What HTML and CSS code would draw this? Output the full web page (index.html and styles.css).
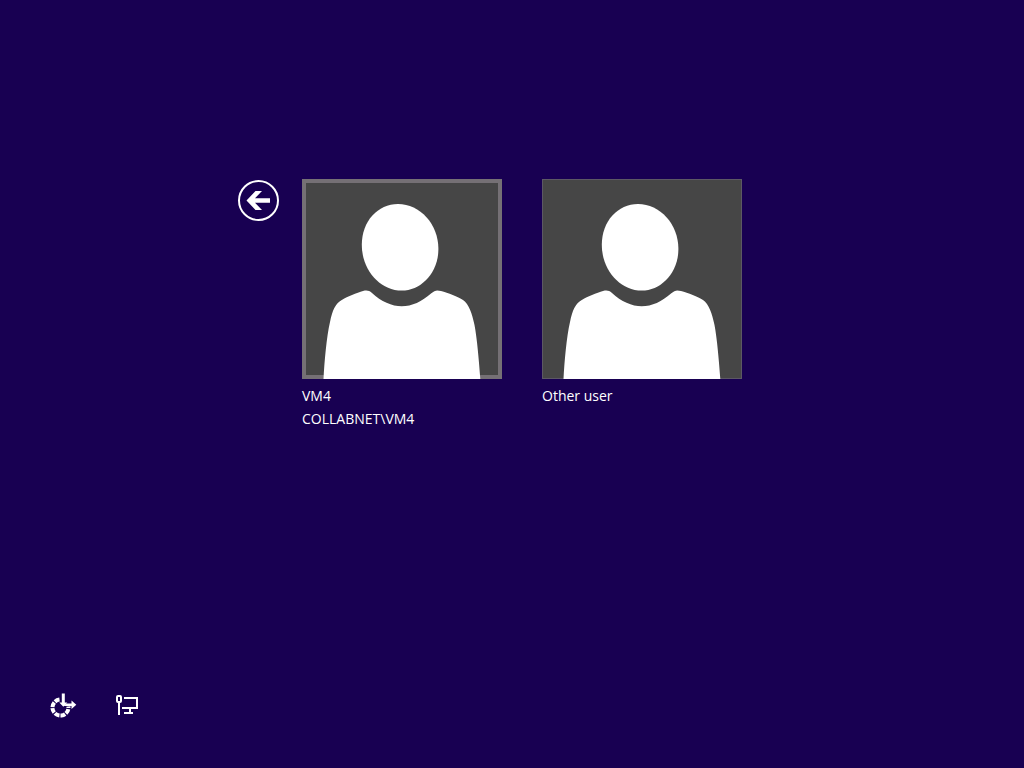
FILE: index.html
```html
<!DOCTYPE html>
<html lang="en">

<head>
    <meta charset="UTF-8">
    <meta name="viewport" content="width=device-width, initial-scale=1.0">
    <title>Sign in</title>
    <link rel="stylesheet" href="styles.css">
</head>

<body>
    <main class="sign-in">
        <button class="back" type="button" aria-label="Back">
            <svg viewBox="0 0 42 42" aria-hidden="true">
                <circle cx="20.5" cy="21.5" r="19.5" />
                <path d="M8.500 21.500L17.500 12H24L17 19.300H32V23.700H17L24 31H17.500Z" />
            </svg>
        </button>
        <div class="users">
            <button class="user selected" type="button">
                <svg class="avatar" viewBox="0 0 200 200" aria-hidden="true">
                    <rect class="frame" width="200" height="200" />
                    <rect class="backdrop" x="4" y="4" width="192" height="192" />
                    <path class="person" d="M96 25C118 25 136.4 45 136.4 70C136.4 94 119 111.6 99.7 111.6C78 111.6 59.8 91 59.8 66C59.8 42 76 25 96 25Z" />
                    <path class="person" d="M21.5 200C22.5 182 24.500 158 28 143C30.500 131 33 125.500 39 121.500C45 117.500 55 114 61 112C65 111 67 111.500 70 114C79 122.500 90 127.300 99.700 127.300C110 127.300 120 122.500 129 114.500C133 111 135 111 139 112C146 114 156 117.500 161 121C167 125.500 170 134 172.500 146C175 159 177 182 178.300 200Z" />
                </svg>
                <span class="name">VM4</span>
                <span class="name">COLLABNET\VM4</span>
            </button>
            <button class="user" type="button">
                <svg class="avatar" viewBox="0 0 200 200" aria-hidden="true">
                    <rect class="frame" width="200" height="200" />
                    <rect class="backdrop" x="1" y="1" width="198" height="198" />
                    <path class="person" d="M96 25C118 25 136.4 45 136.4 70C136.4 94 119 111.6 99.7 111.6C78 111.6 59.8 91 59.8 66C59.8 42 76 25 96 25Z" />
                    <path class="person" d="M21.5 200C22.5 182 24.500 158 28 143C30.500 131 33 125.500 39 121.500C45 117.500 55 114 61 112C65 111 67 111.500 70 114C79 122.500 90 127.300 99.700 127.300C110 127.300 120 122.500 129 114.500C133 111 135 111 139 112C146 114 156 117.500 161 121C167 125.500 170 134 172.500 146C175 159 177 182 178.300 200Z" />
                </svg>
                <span class="name">Other user</span>
            </button>
        </div>
    </main>

    <footer class="tools">
        <button class="tool" type="button" aria-label="Ease of access">
            <svg viewBox="0 0 28 28" aria-hidden="true">
                <path class="ring" d="M9.500 7.600A8 8 0 1 0 18.400 14.600" />
                <path class="solid" d="M11.800 1.500H14.800V10.500H17.300L13.300 14.800L9.300 10.500H11.800Z" />
                <path class="solid" d="M16 11.500H21.500V8.500L26.300 12.800L21.500 17V14H13.500Z" />
            </svg>
        </button>
        <button class="tool" type="button" aria-label="Network">
            <svg viewBox="0 0 28 28" aria-hidden="true">
                <rect class="line" x="1" y="4" width="4" height="6" rx="1" />
                <path class="line" d="M3 10V23M8 6H21V16H6M14 16V21M8 21H17" />
            </svg>
        </button>
    </footer>
</body>

</html>
```

FILE: styles.css
```css
* {
    box-sizing: border-box;
}

body {
    margin: 0;
    min-height: 100vh;
    display: flex;
    flex-direction: column;
    justify-content: space-between;
    background-color: #180052;
    color: #ffffff;
    font-family: "Open Sans", "Noto Sans", sans-serif;
}

button {
    padding: 0;
    border: none;
    background: none;
    color: inherit;
    font: inherit;
    cursor: pointer;
}

svg {
    display: block;
}

.sign-in {
    display: flex;
    justify-content: center;
    align-items: flex-start;
    gap: 22px;
    padding: 179px 44px 0 0;
}

.back {
    flex: none;
    width: 42px;
}

.back circle {
    fill: none;
    stroke: #ffffff;
    stroke-width: 2;
}

.back path {
    fill: #ffffff;
}

.users {
    display: flex;
    align-items: flex-start;
    flex-wrap: wrap;
    gap: 40px;
}

.user {
    display: flex;
    flex-direction: column;
    width: 200px;
    text-align: left;
}

.avatar {
    width: 100%;
    margin-bottom: 5px;
}

.frame {
    fill: #5c5864;
}

.selected .frame {
    fill: #757075;
}

.backdrop {
    fill: #464646;
}

.person {
    fill: #ffffff;
}

.name {
    font-size: 14px;
    line-height: 23px;
}

.tools {
    display: flex;
    gap: 38px;
    padding: 0 50px 48px;
}

.tool {
    width: 28px;
}

.ring,
.line {
    fill: none;
    stroke: #ffffff;
    stroke-width: 2;
}

.ring {
    stroke-width: 4;
    stroke-dasharray: 5 1;
}

.solid {
    fill: #ffffff;
}
```
